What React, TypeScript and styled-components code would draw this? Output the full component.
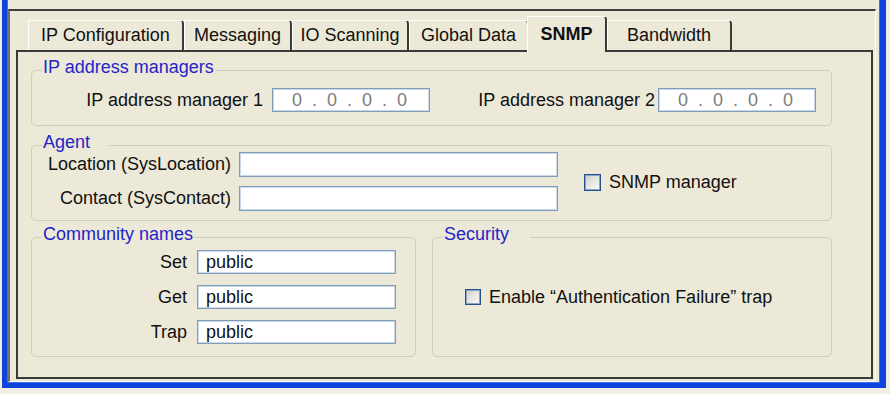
import styled, { createGlobalStyle } from "styled-components";

const GlobalStyle = createGlobalStyle`
  html, body {
    margin: 0;
    padding: 0;
    background: #f1efe4;
  }
  body {
    font-family: "Liberation Sans", Arial, sans-serif;
    font-size: 18px;
    color: #111;
  }
`;

const cream = "#ece9d8";

const Window = styled.div`
  box-sizing: border-box;
  width: 884px;
  height: 388px;
  margin-left: 2px;
  background: ${cream};
  border: 5px solid #0c44dc;
  border-top: none;
  border-right-width: 6px;
  box-shadow: inset 1px 0 #3a6ef2, inset -1px 0 #3a6ef2, inset 0 -1px #3a6ef2;
  padding: 9px 4px 1px 1px;
`;

const Frame = styled.div`
  box-sizing: border-box;
  height: 100%;
  display: flex;
  flex-direction: column;
  border-top: 2px solid #404040;
  border-left: 2px solid #6e6e6e;
  border-right: 1px solid #fff;
  border-bottom: 1px solid #fff;
  padding: 5px 2px 2px 6px;
`;

const TabStrip = styled.div`
  display: flex;
  align-items: flex-end;
  height: 34px;
  padding-left: 12px;
`;

const Tab = styled.div<{ $w: number; $active?: boolean }>`
  box-sizing: border-box;
  position: relative;
  z-index: ${(p) => (p.$active ? 2 : 0)};
  width: ${(p) => p.$w}px;
  height: ${(p) => (p.$active ? 36 : 30)}px;
  margin-bottom: ${(p) => (p.$active ? -2 : 0)}px;
  margin-left: ${(p) => (p.$active ? -2 : 0)}px;
  display: flex;
  align-items: center;
  justify-content: center;
  background: ${cream};
  border-top: 1px solid #fff;
  border-left: 1px solid #fff;
  border-right: 2px solid #3a3a3a;
  border-top-right-radius: 4px;
  font-weight: ${(p) => (p.$active ? 700 : 400)};
  white-space: nowrap;
`;

const Panel = styled.div`
  box-sizing: border-box;
  flex: 1;
  border: 2px solid #3a3a3a;
  padding: 18px 0 0 13px;
  display: flex;
  flex-direction: column;
`;

const GroupBox = styled.div<{ $w?: number; $gap?: number }>`
  box-sizing: border-box;
  width: ${(p) => (p.$w ? `${p.$w}px` : "auto")};
  margin-top: ${(p) => p.$gap ?? 0}px;
  display: flex;
  flex-direction: column;
  border: 1px solid #d0cdbc;
  border-radius: 5px;
`;

const GroupTitle = styled.div<{ $trail?: number }>`
  align-self: flex-start;
  margin: -14px 0 0 10px;
  padding: 0 ${(p) => p.$trail ?? 2}px 0 1px;
  line-height: 20px;
  background: ${cream};
  color: #2424c8;
  white-space: nowrap;
`;

const GroupRow = styled.div`
  display: flex;
  gap: 16px;
  width: 801px;
`;

const IpRow = styled.div`
  display: grid;
  grid-template-columns: 240px 158px 228px 158px;
  align-items: center;
  margin: 11px 0 13px;
`;

const FieldLabel = styled.span<{ $pad?: number }>`
  text-align: right;
  padding-right: ${(p) => p.$pad ?? 0}px;
  white-space: nowrap;
`;

const IpBox = styled.div`
  box-sizing: border-box;
  height: 24px;
  display: flex;
  align-items: center;
  padding-left: 19px;
  background: #fff;
  border: 1px solid #7f9db9;
  box-shadow: inset 0 0 0 1px #cbd8e7;
  color: #7c7c7c;
`;

const Octet = styled.span`
  width: 10px;
  text-align: center;
`;

const Dot = styled.span`
  width: 25px;
  text-align: center;
`;

const TextBox = styled.input<{ $h?: number }>`
  box-sizing: border-box;
  width: 100%;
  height: ${(p) => p.$h ?? 25}px;
  margin: 0;
  padding: 0 8px;
  background: #fff;
  border: 1px solid #7f9db9;
  box-shadow: inset 0 0 0 1px #cbd8e7;
  border-radius: 0;
  font: inherit;
  color: #111;
  outline: none;
`;

const AgentGrid = styled.div`
  display: grid;
  grid-template-columns: 199px 319px auto;
  grid-auto-rows: 25px;
  column-gap: 8px;
  row-gap: 9px;
  align-items: center;
  margin-bottom: 9px;
`;

const CommunityGrid = styled.div`
  display: grid;
  grid-template-columns: 155px 199px;
  grid-auto-rows: 24px;
  column-gap: 10px;
  row-gap: 11px;
  align-items: center;
  margin: 6px 0 12px;
`;

const CheckRow = styled.label<{ $indent: number }>`
  display: flex;
  align-items: center;
  gap: 8px;
  padding-left: ${(p) => p.$indent}px;
  white-space: nowrap;
`;

const AgentCheck = styled(CheckRow)`
  grid-column: 3;
  grid-row: 1 / span 2;
  align-self: center;
  margin-top: 2px;
`;

const Box = styled.span<{ $size: number }>`
  box-sizing: border-box;
  width: ${(p) => p.$size}px;
  height: ${(p) => p.$size}px;
  flex: none;
  border: 1px solid #22508f;
  box-shadow: inset 0 0 0 1px #8aa2c8;
  background: linear-gradient(135deg, #cfcec6 0%, #e9e8e2 55%, #fbfbf9 100%);
`;

const SecurityBody = styled.div`
  flex: 1;
  display: flex;
  align-items: center;
  padding-bottom: 6px;
`;

const tabs = [
  { label: "IP Configuration", w: 156 },
  { label: "Messaging", w: 108 },
  { label: "IO Scanning", w: 117 },
  { label: "Global Data", w: 120 },
  { label: "SNMP", w: 80, active: true },
  { label: "Bandwidth", w: 125 },
];

const IpAddress = () => (
  <IpBox>
    <Octet>0</Octet>
    <Dot>.</Dot>
    <Octet>0</Octet>
    <Dot>.</Dot>
    <Octet>0</Octet>
    <Dot>.</Dot>
    <Octet>0</Octet>
  </IpBox>
);

const App = () => (
  <>
    <GlobalStyle />
    <Window>
      <Frame>
        <TabStrip>
          {tabs.map((t) => (
            <Tab key={t.label} $w={t.w} $active={t.active}>
              {t.label}
            </Tab>
          ))}
        </TabStrip>
        <Panel>
          <GroupBox $w={801}>
            <GroupTitle>IP address managers</GroupTitle>
            <IpRow>
              <FieldLabel $pad={9}>IP address manager 1</FieldLabel>
              <IpAddress />
              <FieldLabel $pad={3}>IP address manager 2</FieldLabel>
              <IpAddress />
            </IpRow>
          </GroupBox>

          <GroupBox $w={801} $gap={19}>
            <GroupTitle $trail={19}>Agent</GroupTitle>
            <AgentGrid>
              <FieldLabel>Location (SysLocation)</FieldLabel>
              <TextBox defaultValue="" />
              <AgentCheck $indent={18}>
                <Box $size={17} />
                SNMP manager
              </AgentCheck>
              <FieldLabel>Contact (SysContact)</FieldLabel>
              <TextBox defaultValue="" />
            </AgentGrid>
          </GroupBox>

          <GroupRow>
            <GroupBox $w={385} $gap={16}>
              <GroupTitle $trail={1}>Community names</GroupTitle>
              <CommunityGrid>
                <FieldLabel>Set</FieldLabel>
                <TextBox $h={24} defaultValue="public" />
                <FieldLabel>Get</FieldLabel>
                <TextBox $h={24} defaultValue="public" />
                <FieldLabel>Trap</FieldLabel>
                <TextBox $h={24} defaultValue="public" />
              </CommunityGrid>
            </GroupBox>
            <GroupBox $w={400} $gap={16}>
              <GroupTitle $trail={21}>Security</GroupTitle>
              <SecurityBody>
                <CheckRow $indent={32}>
                  <Box $size={16} />
                  Enable “Authentication Failure” trap
                </CheckRow>
              </SecurityBody>
            </GroupBox>
          </GroupRow>
        </Panel>
      </Frame>
    </Window>
  </>
);

export default App;
